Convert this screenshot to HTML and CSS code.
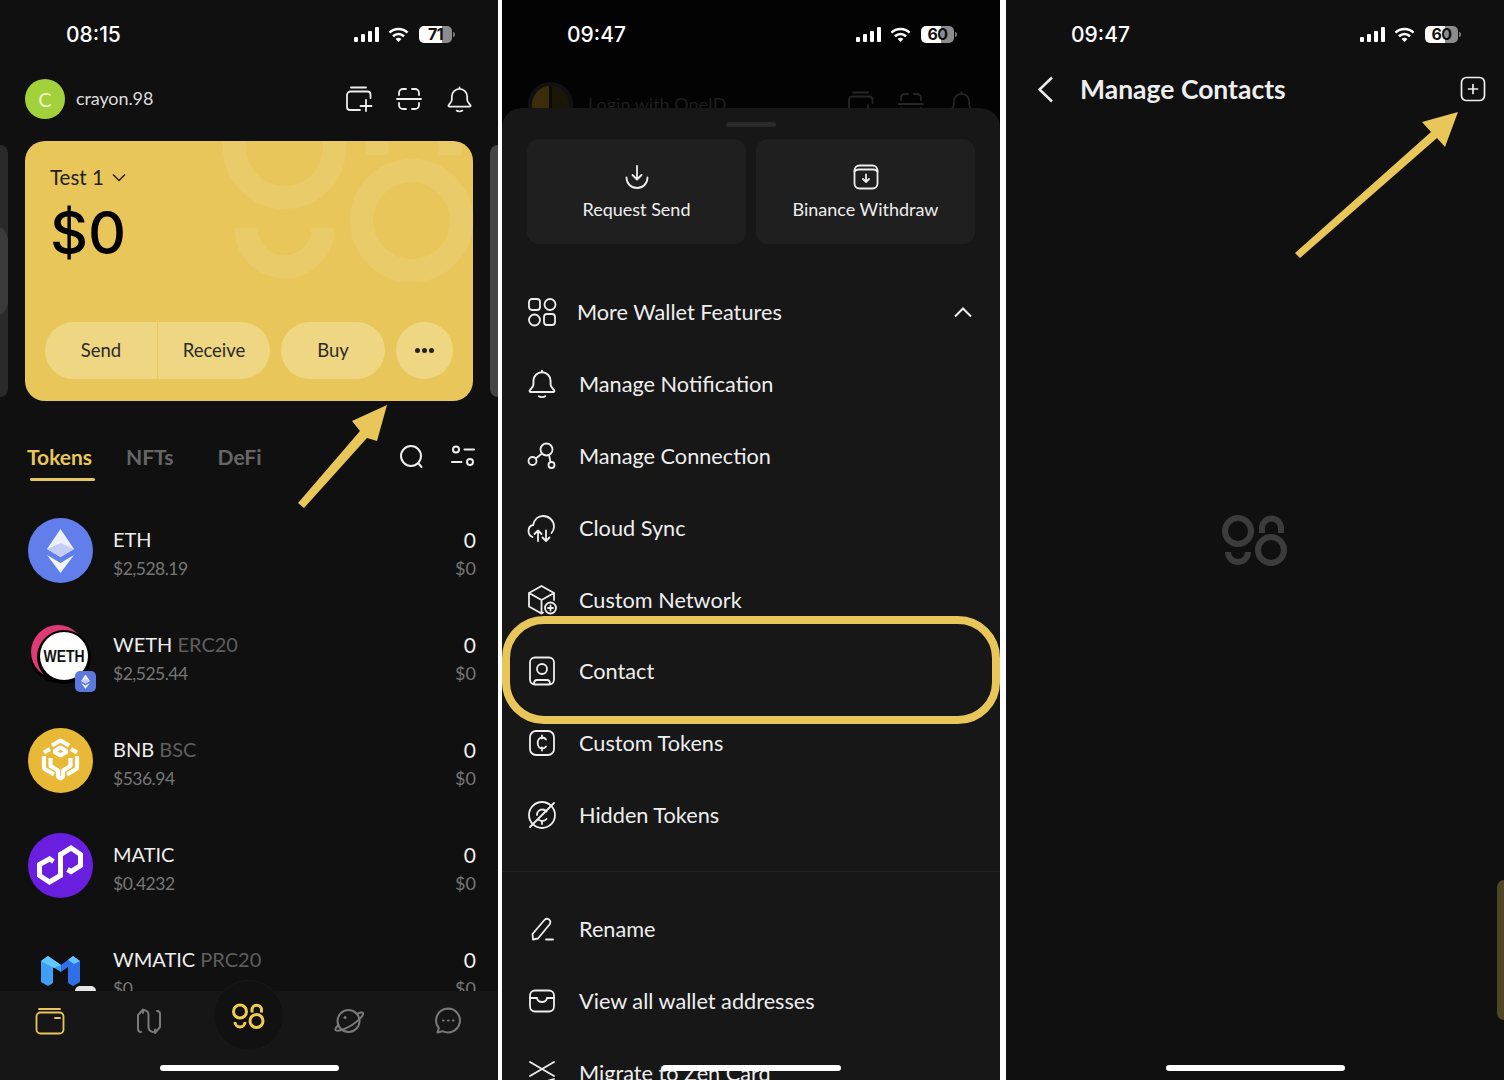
FILE: index.html
```html
<!DOCTYPE html>
<html lang="en">
<head>
  <meta charset="UTF-8">
  <title>Manage Contacts</title>
  <link rel="stylesheet" href="styles.css">
</head>
<body>
  <!-- shared icons -->
  <svg class="defs" width="0" height="0">
    <symbol id="signal" viewBox="0 0 25 15"><rect x="0" y="10" width="4" height="5" rx="1"/><rect x="7" y="7" width="4" height="8" rx="1"/><rect x="14" y="4" width="4" height="11" rx="1"/><rect x="21" y="0" width="4" height="15" rx="1"/></symbol>
    <symbol id="wifi" viewBox="0 0 21 15"><path d="M1.5 5.6a13 13 0 0 1 18 0M5 9.2a8 8 0 0 1 11 0" fill="none" stroke="#fff" stroke-width="2.6"/><path d="M10.5 15 7.6 12a4 4 0 0 1 5.8 0z" fill="#fff"/></symbol>
    <symbol id="bell" viewBox="0 0 26 28"><path d="M13 3a8 8 0 0 0-8 8v3.5c0 2-2.2 3.6-3.4 5.4-.5 1 .2 1.6 1 1.6h20.800c.8 0 1.500-.6 1-1.600-1.200-1.800-3.400-3.400-3.400-5.400V11a8 8 0 0 0-8-8zM13 3V1.500M10 25.500c1.500 1 4.500 1 6 0" fill="none" stroke="currentColor" stroke-width="1.800" stroke-linecap="round" stroke-linejoin="round"/></symbol>
    <symbol id="wallet-add" viewBox="0 0 27 26"><path d="M5 1.500h15M1 21V9a3.500 3.500 0 0 1 3.500-3.500h17A3 3 0 0 1 24.500 8.500V12M1 21a3 3 0 0 0 3 3h10M20 14v11M14.500 20h11" fill="none" stroke="currentColor" stroke-width="1.800" stroke-linecap="round"/></symbol>
    <symbol id="scan" viewBox="0 0 26 24"><path d="M3 8V6a4 4 0 0 1 4-4h3M16 2h3a4 4 0 0 1 4 4v2M1 12h24M3 16v2a4 4 0 0 0 4 4h3M16 22h3a4 4 0 0 0 4-4v-2" fill="none" stroke="currentColor" stroke-width="1.800" stroke-linecap="round"/></symbol>
    <symbol id="logo98" viewBox="0 0 66 54"><g fill="none" stroke="currentColor" stroke-width="6"><circle cx="16" cy="17" r="13"/><circle cx="49" cy="36" r="13"/><path d="M40 19v-5a9.500 9.500 0 0 1 19 0v5M6 38a10 10 0 0 0 20 0"/></g></symbol>
    <symbol id="eth" viewBox="0 0 65 65"><path d="M32.500 11 19 31l13.500 8 13.500-8z" fill="#eef1fd"/><path d="M19 31l13.500-6 13.500 6-13.500 8z" fill="#c3cdf6"/><path d="M19 37l13.500 18L46 37l-13.500 8z" fill="#f4f6fe"/></symbol>
  </svg>

  <div class="screens">
    <!-- wallet home -->
    <section class="phone phone-home">
      <div class="status">
        <span class="time">08:15</span>
        <div class="status-icons">
          <svg class="s-signal"><use href="#signal"/></svg>
          <svg class="s-wifi"><use href="#wifi"/></svg>
          <span class="battery bat-71">71</span>
        </div>
      </div>

      <div class="top-row">
        <div class="avatar">C</div>
        <span class="user">crayon.98</span>
        <div class="top-icons">
          <svg class="t-add"><use href="#wallet-add"/></svg>
          <svg class="t-scan"><use href="#scan"/></svg>
          <svg class="t-bell"><use href="#bell"/></svg>
        </div>
      </div>

      <div class="card-row">
        <div class="peek peek-l"></div>
        <div class="card">
          <svg class="card-mark"><use href="#logo98"/></svg>
          <div class="card-name">Test 1
            <svg width="14" height="9" viewBox="0 0 14 9"><path d="M1 1.500 7 7.500l6-6" fill="none" stroke="#222" stroke-width="1.500"/></svg>
          </div>
          <div class="card-amount">$0</div>
          <div class="card-btns">
            <div class="btn-pair">
              <span class="btn-half">Send</span>
              <span class="btn-half btn-rec">Receive</span>
            </div>
            <span class="btn-buy">Buy</span>
            <span class="btn-more"><i></i><i></i><i></i></span>
          </div>
        </div>
        <div class="peek peek-r"></div>
      </div>

      <div class="tabs">
        <span class="tab active">Tokens</span>
        <span class="tab t-nft">NFTs</span>
        <span class="tab t-defi">DeFi</span>
        <svg class="tab-search" width="25" height="25" viewBox="0 0 25 25"><circle cx="12" cy="12" r="10" fill="none" stroke="#eee" stroke-width="2"/><path d="m19.500 19.500 3 3.500" stroke="#eee" stroke-width="2" stroke-linecap="round"/></svg>
        <svg class="tab-filter" width="24" height="24" viewBox="0 0 24 24"><g fill="none" stroke="#eee" stroke-width="2" stroke-linecap="round"><circle cx="5" cy="4.500" r="3"/><path d="M13.500 4.500H23M1 17h9.500"/><circle cx="19" cy="17" r="3"/></g></svg>
      </div>

      <div class="tokens">
        <div class="token">
          <svg class="coin" viewBox="0 0 65 65"><circle cx="32.500" cy="32.500" r="32.500" fill="#627eea"/><use href="#eth" width="65" height="65"/></svg>
          <div class="tk-text"><div class="tk-name">ETH</div><div class="tk-price">$2,528.19</div></div>
          <div class="tk-val"><div class="tk-qty">0</div><div class="tk-usd">$0</div></div>
        </div>
        <div class="token">
          <div class="coin coin-weth">
            <svg class="coin" viewBox="0 0 65 65"><circle cx="30" cy="32" r="28" fill="#000"/><circle cx="30" cy="29" r="27" fill="#de3a76"/><circle cx="36" cy="34" r="27" fill="#000"/><circle cx="36" cy="33" r="24" fill="#fff"/><text x="36" y="39" text-anchor="middle" class="weth-txt" textLength="41" lengthAdjust="spacingAndGlyphs">WETH</text></svg>
            <span class="chain"><svg width="21" height="21" viewBox="0 0 65 65"><use href="#eth" width="65" height="65"/></svg></span>
          </div>
          <div class="tk-text"><div class="tk-name">WETH <span>ERC20</span></div><div class="tk-price">$2,525.44</div></div>
          <div class="tk-val"><div class="tk-qty">0</div><div class="tk-usd">$0</div></div>
        </div>
        <div class="token">
          <svg class="coin" viewBox="0 0 65 65"><circle cx="32.500" cy="32.500" r="32.500" fill="#e8b936"/><g fill="none" stroke="#fff" stroke-width="4.200" stroke-linejoin="bevel"><path d="M24 17.500l8.500-5 8.500 5M32.500 19.500l6.500 4-6.500 4-6.500-4zM22 21l-6 3.500M43 21l6 3.500M16 28v12.500l10 6M49 28v12.500l-10 6M22.500 30v8l7.500 4.500v6l2.500 2 2.500-2v-6l7.500-4.500v-8"/></g></svg>
          <div class="tk-text"><div class="tk-name">BNB <span>BSC</span></div><div class="tk-price">$536.94</div></div>
          <div class="tk-val"><div class="tk-qty">0</div><div class="tk-usd">$0</div></div>
        </div>
        <div class="token">
          <svg class="coin" viewBox="0 0 65 65"><circle cx="32.500" cy="32.500" r="32.500" fill="#6a1ee0"/><path d="M25.500 28.500 21.500 26l-10 5.500v11L21.500 49l11-6.500v-21L43 15l9.500 6.500v11L43 38.500l-3.500-2" fill="none" stroke="#fff" stroke-width="5"/></svg>
          <div class="tk-text"><div class="tk-name">MATIC</div><div class="tk-price">$0.4232</div></div>
          <div class="tk-val"><div class="tk-qty">0</div><div class="tk-usd">$0</div></div>
        </div>
        <div class="token">
          <div class="coin coin-weth">
            <svg class="coin" viewBox="0 0 65 65"><path d="M13 23l7-5 13 9v7l-8-5v16l-5 3-7-4z" fill="#3f9ef5"/><path d="M52 23l-7-5-12 9v7l7-5v16l5 3 7-4z" fill="#2f6fe8"/><path d="M13 23l7-5 13 9-7 3z" fill="#62c6ff"/><path d="M52 23l-7-5-5 4 6 4z" fill="#62c6ff"/></svg>
            <span class="chain chain-w"></span>
          </div>
          <div class="tk-text"><div class="tk-name">WMATIC <span>PRC20</span></div><div class="tk-price">$0</div></div>
          <div class="tk-val"><div class="tk-qty">0</div><div class="tk-usd">$0</div></div>
        </div>
      </div>

      <nav class="tabbar">
        <div class="tb-item"><svg width="30" height="28" viewBox="0 0 30 28" fill="none" stroke="#e8c65a" stroke-width="1.800" stroke-linecap="round"><path d="M4 2h21"/><rect x="1.500" y="5.500" width="27" height="21" rx="4"/><path d="M20 11h5"/></svg></div>
        <div class="tb-item"><svg width="26" height="28" viewBox="0 0 26 28" fill="none" stroke="#7a7a7a" stroke-width="2" stroke-linejoin="round" stroke-linecap="round"><path d="M5 25a3 3 0 0 1-3-3V8l5-5.500V6M8 3c3 .5 4.500 2 4.500 5v12c0 3 1.500 4.500 4.500 5M24 20V7a3 3 0 0 0-3-3M24 20l-5 6v-3.500"/></svg></div>
        <div class="tb-item tb-gap"></div>
        <div class="tb-item"><svg width="31" height="28" viewBox="0 0 31 28" fill="none" stroke="#7a7a7a" stroke-width="2"><circle cx="15.500" cy="14" r="11"/><path d="M24 7c3-1.500 5.500-2 6-1 1 2-4 7.500-11 12S4 25 2.500 23c-.6-1 1-3 3-5" stroke-linecap="round"/><circle cx="12" cy="10.500" r="1.500" fill="#7a7a7a" stroke="none"/></svg></div>
        <div class="tb-item"><svg width="28" height="27" viewBox="0 0 28 27" fill="none" stroke="#7a7a7a" stroke-width="2"><path d="M14 1.500a12 12 0 1 1-5.500 22.700L3.500 25.500l1.300-4.500A12 12 0 0 1 14 1.500z" stroke-linejoin="round"/><path d="M9 13.500h.5M14 13.500h.5M19 13.500h.5" stroke-linecap="round" stroke-width="2.200"/></svg></div>
      </nav>
      <div class="tb-center"><svg width="33" height="27" class="tb-logo"><use href="#logo98"/></svg></div>

      <svg class="arrow" viewBox="0 0 498 1080"><polygon points="298,503 360,431 352,421 387,405 377,441 367,438 304,508"/></svg>
      <div class="home-bar"></div>
    </section>

    <!-- more sheet -->
    <section class="phone phone-sheet">
      <div class="status">
        <span class="time">09:47</span>
        <div class="status-icons">
          <svg class="s-signal"><use href="#signal"/></svg>
          <svg class="s-wifi"><use href="#wifi"/></svg>
          <span class="battery bat-60">60</span>
        </div>
      </div>

      <div class="dim-row">
        <div class="dim-avatar"></div>
        <span class="dim-name">Login with OneID</span>
        <div class="top-icons">
          <svg class="t-add"><use href="#wallet-add"/></svg>
          <svg class="t-scan"><use href="#scan"/></svg>
          <svg class="t-bell"><use href="#bell"/></svg>
        </div>
      </div>

      <div class="sheet">
        <div class="grabber"></div>
        <div class="quick">
          <div class="quick-btn">
            <svg width="26" height="26" viewBox="0 0 26 26" fill="none" stroke="#eee" stroke-width="1.800" stroke-linecap="round" stroke-linejoin="round"><path d="M13 2v13M8.500 11l4.500 4.500 4.500-4.500M2.500 13.500c0 6 4.500 10.500 10.500 10.500s10.500-4.500 10.500-10.500"/></svg>
            <span>Request Send</span>
          </div>
          <div class="quick-btn">
            <svg width="26" height="26" viewBox="0 0 26 26" fill="none" stroke="#eee" stroke-width="1.800" stroke-linecap="round" stroke-linejoin="round"><rect x="1.500" y="1.500" width="23" height="23" rx="5"/><path d="M1.500 7.500c1-1.500 2.500-2 4-2h15c1.500 0 3 .5 4 2M13 10.500v7M10 15l3 3 3-3"/></svg>
            <span>Binance Withdraw</span>
          </div>
        </div>

        <div class="menu menu-first">
          <div class="menu-row row-more">
            <svg class="mi" viewBox="0 0 30 30"><rect x="2" y="2" width="11" height="11" rx="3"/><circle cx="23" cy="7.500" r="5.500"/><circle cx="7.500" cy="23" r="5.500"/><rect x="17" y="17" width="11" height="11" rx="3"/></svg>
            <span>More Wallet Features</span>
            <svg class="row-caret" width="20" height="12" viewBox="0 0 20 12"><path d="M2 10.500 10 2.500l8 8" fill="none" stroke="#eee" stroke-width="2"/></svg>
          </div>
          <div class="menu-row">
            <svg class="mi mi-use"><use href="#bell"/></svg>
            <span>Manage Notification</span>
          </div>
          <div class="menu-row">
            <svg class="mi" viewBox="0 0 30 30"><circle cx="19.500" cy="8.500" r="6"/><circle cx="5.500" cy="20" r="4"/><circle cx="24.500" cy="24" r="3"/><path d="M8.800 17.500 15 12.500M22 14l1.500 7"/></svg>
            <span>Manage Connection</span>
          </div>
          <div class="menu-row">
            <svg class="mi" viewBox="0 0 30 30"><path d="M5.500 24C3 23 1.500 20.500 1.500 18c0-3 2-5.500 4.700-6C7.200 6.500 11 3 16 3c6 0 11 4.500 11 10.500 0 2.500-.8 4.700-2.500 6.500"/><path d="M11 28V17.500M7.500 21l3.500-3.500 3.500 3.500M19 17.500V28M15.500 24.500 19 28l3.500-3.500"/></svg>
            <span>Cloud Sync</span>
          </div>
          <div class="menu-row">
            <svg class="mi" viewBox="0 0 30 30"><path d="M16 27.500 14.500 28.500 2 21.500V8l12.500-7L27 8v7M2 8l12.500 7L27 8M14.500 15v13"/><circle cx="23.500" cy="23" r="5.500"/><path d="M23.500 20.500v5M21 23h5"/></svg>
            <span>Custom Network</span>
          </div>
          <div class="menu-row">
            <svg class="mi" viewBox="0 0 30 30"><rect x="3" y="1.500" width="24" height="27" rx="5"/><circle cx="15" cy="13" r="5"/><path d="M7 28c0-2 1-4 3-4h10c2 0 3 2 3 4"/></svg>
            <span>Contact</span>
          </div>
          <div class="menu-row">
            <svg class="mi" viewBox="0 0 30 30"><rect x="3" y="3" width="24" height="24" rx="6"/><path d="M19 11.500c-.8-1.300-2.200-2-3.800-2-2.700 0-4.500 2.400-4.500 5.500s1.800 5.500 4.500 5.500c1.600 0 3-.7 3.800-2M15 7.500v3M15 19.500v3"/></svg>
            <span>Custom Tokens</span>
          </div>
          <div class="menu-row">
            <svg class="mi" viewBox="0 0 30 30"><circle cx="15" cy="15" r="13"/><path d="M3 27 27 3M19.500 11.500c-1-1.200-2.500-2-4.200-2-3.200 0-5.300 2.500-5.300 5.500M12 20c1 .6 2 1 3.300 1 1.700 0 3.300-.8 4.200-2M15 21.500v2.500"/></svg>
            <span>Hidden Tokens</span>
          </div>
        </div>

        <div class="sheet-line"></div>

        <div class="menu">
          <div class="menu-row">
            <svg class="mi" viewBox="0 0 30 30"><path d="M6 25.500 5.500 20 17 6.500c1.500-1.800 3.500-2 5-1s2 3 .5 5L11 24.500z"/><path d="M19 25.500h7"/></svg>
            <span>Rename</span>
          </div>
          <div class="menu-row">
            <svg class="mi" viewBox="0 0 30 30"><rect x="3" y="4.500" width="24" height="21" rx="5"/><path d="M3 12h7c.5 3 2.500 4 5 4s4.500-1 5-4h7"/></svg>
            <span>View all wallet addresses</span>
          </div>
          <div class="menu-row">
            <svg class="mi" viewBox="0 0 30 30"><path d="M3 4l24 14M27 4 3 18M3 28l24-7"/></svg>
            <span>Migrate to Zen Card</span>
          </div>
        </div>
      </div>

      <div class="highlight"></div>
      <div class="home-bar"></div>
    </section>

    <!-- contacts -->
    <section class="phone phone-contacts">
      <div class="status">
        <span class="time">09:47</span>
        <div class="status-icons">
          <svg class="s-signal"><use href="#signal"/></svg>
          <svg class="s-wifi"><use href="#wifi"/></svg>
          <span class="battery bat-60">60</span>
        </div>
      </div>
      <div class="navbar">
        <svg width="17" height="27" viewBox="0 0 17 27"><path d="M15 1.500 2.500 13.500 15 25.500" fill="none" stroke="#eee" stroke-width="2.500"/></svg>
        <h1>Manage Contacts</h1>
        <svg class="nav-add" width="26" height="26" viewBox="0 0 26 26" fill="none" stroke="#eee" stroke-width="1.700" stroke-linecap="round"><rect x="1.500" y="1.500" width="23" height="23" rx="5"/><path d="M13 8.500v9M8.500 13h9"/></svg>
      </div>
      <div class="empty"><svg width="66" height="54"><use href="#logo98"/></svg></div>
      <div class="side-handle"></div>
      <svg class="arrow" viewBox="0 0 498 1080"><polygon points="289,253 425,132 416,122 452,112 439,147 431,138 294,258"/></svg>
      <div class="home-bar"></div>
    </section>
  </div>
</body>
</html>
```

FILE: styles.css
```css
* {
  margin: 0;
  padding: 0;
  box-sizing: border-box;
}

body {
  background: #fff;
  font-family: "Lato", "Noto Sans", sans-serif;
  color: #eee;
  height: 1080px;
  overflow: hidden;
}

.defs {
  position: absolute;
}

.screens {
  display: flex;
  gap: 4px;
}

.phone {
  position: relative;
  width: 498px;
  height: 1080px;
  background: #101010;
  overflow: hidden;
  flex-shrink: 0;
}

.phone-contacts {
  margin-left: 2px;
}

.phone-sheet {
  background: #030303;
}

/* status bar */
.status {
  display: flex;
  align-items: center;
  height: 68px;
  padding: 0 46px 0 65px;
}

.phone-home .time {
  margin-left: 1px;
}

.time {
  font-family: "Inter", sans-serif;
  font-size: 21px;
  font-weight: 500;
  color: #fff;
}

.status-icons {
  display: flex;
  align-items: center;
  margin-left: auto;
  fill: #fff;
}

.s-signal {
  width: 25px;
  height: 15px;
  margin-right: 9px;
}

.s-wifi {
  width: 21px;
  height: 15px;
  margin-right: 10px;
}

.battery {
  position: relative;
  width: 33px;
  height: 17px;
  border-radius: 5px;
  font-family: "Inter", sans-serif;
  font-size: 16px;
  font-weight: 700;
  letter-spacing: -0.5px;
  line-height: 17px;
  text-align: center;
  color: #111;
}

.battery::after {
  content: "";
  position: absolute;
  right: -3px;
  top: 6px;
  width: 2px;
  height: 5px;
  background: #777;
  border-radius: 0 2px 2px 0;
}

.bat-71 {
  background: linear-gradient(to right, #fff 71%, #8c8c8c 71%);
}

.bat-60 {
  background: linear-gradient(to right, #fff 60%, #8c8c8c 60%);
}

/* header */
.top-row {
  display: flex;
  align-items: center;
  height: 62px;
  padding-left: 25px;
}

.avatar {
  width: 40px;
  height: 40px;
  border-radius: 50%;
  background: #a3d13c;
  color: #e8f5c5;
  font-size: 20px;
  line-height: 40px;
  text-align: center;
}

.user {
  margin: 0 0 2px 11px;
  font-size: 18px;
  letter-spacing: -0.1px;
  color: #ddd;
}

.top-icons {
  display: flex;
  align-items: center;
  margin-left: auto;
  padding-right: 26px;
  color: #eee;
}

.t-add {
  width: 27px;
  height: 26px;
  margin-right: 23px;
}

.t-scan {
  width: 26px;
  height: 24px;
  margin-right: 25px;
}

.t-bell {
  width: 25px;
  height: 27px;
}

/* wallet card */
.card-row {
  display: flex;
  align-items: center;
  gap: 17px;
  margin-top: 11px;
}

.peek {
  flex: 1;
  height: 252px;
}

.peek-l {
  background: radial-gradient(ellipse 12px 44px at 0 50%, #3b3b3b 98%, #2a2a2a 100%);
  border-radius: 0 10px 10px 0;
}

.peek-r {
  background: #454545;
  border-radius: 10px 0 0 10px;
}

.card {
  position: relative;
  flex: 0 0 448px;
  height: 260px;
  background: #e8c65a;
  border-radius: 20px;
  overflow: hidden;
  color: #222;
}

.card-mark {
  position: absolute;
  left: 198px;
  top: -59px;
  width: 254px;
  height: 208px;
  color: rgba(255, 255, 255, 0.1);
}

.card-name {
  position: relative;
  display: flex;
  align-items: center;
  gap: 8px;
  padding: 23px 0 0 25px;
  font-size: 20.5px;
  line-height: 26px;
}

.card-amount {
  position: relative;
  margin: 8px 0 0 25px;
  font-family: "Inter", sans-serif;
  font-size: 59px;
  font-weight: 500;
  line-height: 70px;
  color: #000;
}

.card-btns {
  position: relative;
  display: flex;
  gap: 11px;
  margin: 54px 0 0 20px;
  font-size: 18.5px;
  color: #2b2b2b;
}

.btn-pair {
  display: flex;
  width: 225px;
  height: 57px;
  border-radius: 29px;
  overflow: hidden;
}

.btn-half {
  flex: 0 0 112px;
  background: #eed682;
  line-height: 57px;
  text-align: center;
}

.btn-rec {
  flex: 1;
  margin-left: 1px;
}

.btn-buy {
  width: 104px;
  height: 57px;
  border-radius: 29px;
  background: #eed682;
  line-height: 57px;
  text-align: center;
}

.btn-more {
  display: flex;
  align-items: center;
  justify-content: center;
  gap: 2px;
  width: 57px;
  height: 57px;
  border-radius: 50%;
  background: #eed682;
}

.btn-more i {
  width: 5px;
  height: 5px;
  border-radius: 50%;
  background: #222;
}

/* tabs */
.tabs {
  display: flex;
  align-items: flex-start;
  height: 56px;
  margin-top: 24px;
  padding: 18px 0 0 27px;
  position: relative;
  font-size: 21px;
  line-height: 28px;
  font-weight: 700;
}

.tab {
  color: #666;
}

.tab.active {
  color: #e8c65a;
}

.tab.active::after {
  content: "";
  display: block;
  width: 65px;
  height: 3px;
  margin: 7px 0 0 3px;
  background: #e8c65a;
  border-radius: 2px;
}

.t-nft {
  margin-left: 31px;
}

.t-defi {
  margin-left: 44px;
}

.tab-search {
  position: absolute;
  left: 399px;
  top: 19px;
}

.tab-filter {
  position: absolute;
  left: 451px;
  top: 20px;
}

/* token list */
.tokens {
  padding-top: 17px;
}

.token {
  display: flex;
  align-items: center;
  height: 105px;
  padding: 0 22px 0 28px;
}

.coin {
  display: block;
  position: relative;
  flex: 0 0 65px;
  width: 65px;
  height: 65px;
}

.chain {
  position: absolute;
  left: 47px;
  top: 48px;
  width: 21px;
  height: 21px;
  border-radius: 5px;
  background: #5d78dc;
}

.chain svg {
  display: block;
}

.chain-w {
  background: #e6e6e6;
}

.weth-txt {
  font-family: "Liberation Sans", sans-serif;
  font-size: 16px;
  font-weight: 700;
  fill: #111;
}

.tk-text {
  margin: 6px 0 0 20px;
}

.tk-name {
  font-size: 20px;
  line-height: 28px;
  color: #eee;
}

.tk-name span {
  color: #5e5e5e;
}

.tk-price {
  margin-top: 2px;
  font-size: 17.5px;
  letter-spacing: -0.5px;
  line-height: 28px;
  color: #777;
}

.tk-val {
  margin: 6px 0 0 auto;
  text-align: right;
}

.tk-qty {
  font-size: 21px;
  line-height: 28px;
  color: #eee;
}

.tk-usd {
  font-size: 18px;
  line-height: 28px;
  color: #777;
}

/* bottom nav */
.tabbar {
  position: absolute;
  left: 0;
  right: 0;
  bottom: 0;
  height: 89px;
  display: flex;
  background: #161616;
}

.tb-item {
  flex: 1;
  display: flex;
  justify-content: center;
  padding-top: 16px;
}

.tb-center {
  position: absolute;
  left: 213px;
  top: 980px;
  width: 71px;
  height: 71px;
  border-radius: 50%;
  background: #111;
  border: 1px solid #191919;
  display: flex;
  justify-content: center;
  padding-top: 22px;
}

.tb-logo {
  color: #efcb50;
}

.home-bar {
  position: absolute;
  left: 0;
  right: 0;
  bottom: 9px;
  width: 179px;
  height: 6px;
  margin: 0 auto;
  background: #fff;
  border-radius: 3px;
}

.arrow {
  position: absolute;
  left: 0;
  top: 0;
  width: 498px;
  height: 1080px;
  fill: #e8c65a;
  pointer-events: none;
}

/* sheet screen */
.dim-row {
  display: flex;
  align-items: center;
  height: 72px;
  padding-left: 26px;
  color: #1f1f1f;
}

.dim-row .top-icons {
  color: #262626;
}

.dim-avatar {
  width: 45px;
  height: 45px;
  border-radius: 50%;
  border: 4px solid #111;
  background: linear-gradient(to right, #3b2d0b 47%, #0a0a0a 47%, #0a0a0a 53%, #1b1708 53%);
}

.dim-name {
  margin-left: 15px;
  font-size: 18px;
  color: #1e1e1e;
}

.sheet {
  position: absolute;
  left: 0;
  right: 0;
  top: 108px;
  bottom: 0;
  background: #171717;
  border-radius: 20px 20px 0 0;
  overflow: hidden;
}

.grabber {
  width: 50px;
  height: 5px;
  margin: 14px auto 12px;
  background: #2a2a2a;
  border-radius: 3px;
}

.quick {
  display: flex;
  gap: 10px;
  padding: 0 25px;
}

.quick-btn {
  flex: 1;
  display: flex;
  flex-direction: column;
  align-items: center;
  height: 105px;
  padding-top: 25px;
  background: #1f1f1f;
  border-radius: 12px;
  font-size: 18px;
  line-height: 28px;
}

.quick-btn span {
  margin-top: 5px;
}

.menu-first {
  margin-top: 32px;
}

.menu-row {
  display: flex;
  align-items: center;
  gap: 20px;
  height: 71.9px;
  padding: 0 27px 0 23px;
  font-size: 21.7px;
}

.row-more {
  gap: 18px;
}

.row-caret {
  margin-left: auto;
}

.mi {
  flex: 0 0 34px;
  width: 34px;
  height: 30px;
  fill: none;
  stroke: #eee;
  stroke-width: 1.800;
  stroke-linecap: round;
  stroke-linejoin: round;
}

.mi-use {
  stroke: none;
  color: #eee;
}

.sheet-line {
  height: 1px;
  margin: 20px 0 21px;
  background: #222;
}

.highlight {
  position: absolute;
  left: 0;
  top: 616px;
  width: 498px;
  height: 108px;
  border: 8px solid #e8c65a;
  border-radius: 42px;
}

/* contacts */
.navbar {
  display: flex;
  align-items: center;
  height: 42px;
  padding: 0 18px 0 31px;
}

.navbar h1 {
  margin-left: 26px;
  font-size: 26.5px;
  font-weight: 700;
  color: #eee;
}

.nav-add {
  margin-left: auto;
}

.empty {
  display: flex;
  justify-content: center;
  padding-top: 404px;
  color: #3c3c3c;
}

.side-handle {
  position: absolute;
  right: 0;
  top: 880px;
  width: 7px;
  height: 140px;
  background: #4f4527;
  border-radius: 8px 0 0 8px;
}
```
